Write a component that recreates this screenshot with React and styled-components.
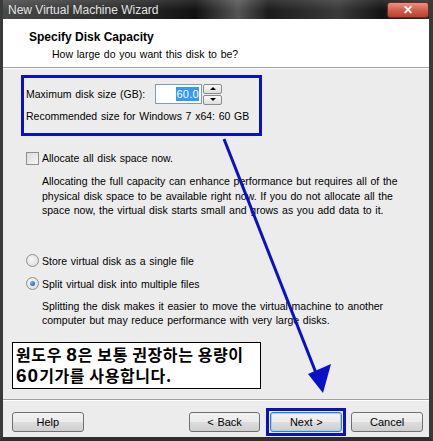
import React from 'react';
import styled, { createGlobalStyle } from 'styled-components';

const Global = createGlobalStyle`
  html, body { margin: 0; padding: 0; background: #fff; }
  body { font-family: "Liberation Sans", Arial, sans-serif; font-size: 10.5px; word-spacing: 0.8px; color: #000; }
`;

const Window = styled.div`
  position: relative;
  width: 433px;
  height: 441px;
  box-sizing: border-box;
  background: #ececec;
  border-left: 3px solid #3a3a3a;
  border-right: 4px solid #3a3a3a;
  border-bottom: 4px solid #2e2e2e;
  display: flex;
  flex-direction: column;
  overflow: hidden;
`;

const TitleBar = styled.div`
  height: 19px;
  margin: 0 -4px 0 -3px;
  padding: 0 4px 0 8px;
  display: flex;
  align-items: center;
  justify-content: space-between;
  background:
    linear-gradient(180deg, rgba(255,255,255,0.12) 0%, rgba(255,255,255,0) 55%),
    linear-gradient(90deg, #4a4a4a 0%, #2a2a2a 30%, #111 45%, #555 55%, #1c1c1c 62%, #3a3a3a 78%, #141414 88%, #2d2d2d 100%);
  color: #e4e4e4;
  font-size: 12px;
  word-spacing: 0;
`;

const CloseButton = styled.div`
  width: 40px;
  height: 14px;
  border-radius: 3px;
  border: 1px solid #6b2a22;
  background: linear-gradient(180deg, #e99384 0%, #d0604f 50%, #b8412f 100%);
  color: #fff;
  font-weight: bold;
  font-size: 12px;
  line-height: 14px;
  text-align: center;
  margin-top: 1px;
`;

const Header = styled.div`
  height: 49px;
  background: #fff;
  border-bottom: 1px solid #a0a0a0;
  box-shadow: 0 1px 0 #fff;
  padding: 11px 0 0 26px;
  box-sizing: border-box;
`;

const HeaderTitle = styled.div`
  font-weight: bold;
  font-size: 12px;
  line-height: 14px;
  word-spacing: 0;
`;

const HeaderSub = styled.div`
  margin: 3px 0 0 23px;
  line-height: 14px;
`;

const Body = styled.div`
  flex: 1;
  padding: 7px 0 0 18px;
  display: flex;
  flex-direction: column;
`;

const HighlightBox = styled.div`
  width: 241px;
  height: 61px;
  box-sizing: border-box;
  border: 3px solid #0a10c8;
  padding: 6px 0 0 2px;
  display: flex;
  flex-direction: column;
  gap: 6px;
`;

const FieldRow = styled.div`
  display: flex;
  align-items: center;
  height: 20px;
`;

const Label = styled.span`
  width: 129px;
`;

const SpinInput = styled.div`
  width: 43px;
  height: 18px;
  border: 1px solid #7f9db9;
  background: #fff;
  display: flex;
  align-items: center;
  justify-content: flex-end;
  padding-right: 2px;
`;

const Selected = styled.span`
  background: #3399ff;
  color: #fff;
  padding: 1px 0;
  font-size: 11px;
  letter-spacing: 0.3px;
`;

const SpinButtons = styled.div`
  margin-left: 1px;
  display: flex;
  flex-direction: column;
  gap: 1px;
`;

const SpinButton = styled.div`
  width: 17px;
  height: 8px;
  border: 1px solid #8a8a8a;
  border-radius: 2px;
  background: linear-gradient(180deg, #fafafa, #dedede);
  display: flex;
  align-items: center;
  justify-content: center;
  &::after {
    content: '';
    border-left: 3px solid transparent;
    border-right: 3px solid transparent;
    ${({ down }) => (down ? 'border-top: 3px solid #000;' : 'border-bottom: 3px solid #000;')}
  }
`;

const Option = styled.div`
  display: flex;
  align-items: center;
  gap: 3px;
  margin-left: 5px;
  height: 14px;
  margin-top: ${({ top }) => top}px;
`;

const CheckBox = styled.span`
  width: 11px;
  height: 11px;
  border: 1px solid #8e8f8f;
  background: linear-gradient(135deg, #dcdcdc, #f6f6f6);
`;

const Radio = styled.span`
  width: 11px;
  height: 11px;
  border-radius: 50%;
  border: 1px solid #8e8f8f;
  background: radial-gradient(circle at 40% 40%, #f8f8f8, #d6d6d6);
  display: flex;
  align-items: center;
  justify-content: center;
  &::after {
    content: '';
    display: ${({ checked }) => (checked ? 'block' : 'none')};
    width: 5px;
    height: 5px;
    border-radius: 50%;
    background: radial-gradient(circle at 35% 35%, #6fb4ff, #0b4fa8);
  }
`;

const Note = styled.p`
  margin: ${({ top }) => top}px 0 0 21px;
  line-height: 14.5px;
  white-space: nowrap;
`;

const KoreanBox = styled.div`
  margin: ${({ top }) => top}px 0 0 -9px;
  width: 249px;
  height: 47px;
  box-sizing: border-box;
  border: 1px solid #000;
  background: #fff;
  padding: 1px 0 0 3px;
  font-family: "Noto Sans CJK KR", sans-serif;
  font-size: 16px;
  font-weight: 700;
  line-height: 21px;
  letter-spacing: 0.6px;
  word-spacing: 0;
  white-space: nowrap;
  b {
    font-weight: 700;
    font-family: "Liberation Sans", "Noto Sans CJK KR", sans-serif;
    font-size: 19px;
    letter-spacing: 1px;
  }
`;

const Footer = styled.div`
  border-top: 1px solid #a0a0a0;
  box-shadow: inset 0 1px 0 #fff;
  height: 38px;
  box-sizing: border-box;
  padding: 12px 6px 0 9px;
  display: flex;
  align-items: flex-start;
`;

const Button = styled.div`
  width: 70px;
  height: 18px;
  border: 1px solid #707070;
  border-radius: 3px;
  background: linear-gradient(180deg, #f2f2f2 0%, #ebebeb 50%, #dddddd 51%, #cfcfcf 100%);
  display: flex;
  align-items: center;
  justify-content: center;
  font-size: 11px;
  margin-left: ${({ gap }) => gap || 0}px;
`;

const FocusFrame = styled.div`
  margin: -4px 0 0 6px;
  padding: 1px;
  border: 3px solid #0a10c8;
  display: flex;
  & > div { border-color: #3c7fb1; box-shadow: inset 0 0 0 1px #97d3f0; }
`;

const Overlay = styled.svg`
  position: absolute;
  left: -3px;
  top: 0;
  pointer-events: none;
`;

export default function App() {
  return (
    <>
      <Global />
      <Window>
        <TitleBar>
          <span>New Virtual Machine Wizard</span>
          <CloseButton>✕</CloseButton>
        </TitleBar>
        <Header>
          <HeaderTitle>Specify Disk Capacity</HeaderTitle>
          <HeaderSub>How large do you want this disk to be?</HeaderSub>
        </Header>
        <Body>
          <HighlightBox>
            <FieldRow>
              <Label>Maximum disk size (GB):</Label>
              <SpinInput><Selected>60.0</Selected></SpinInput>
              <SpinButtons>
                <SpinButton />
                <SpinButton down />
              </SpinButtons>
            </FieldRow>
            <div>Recommended size for Windows 7 x64: 60 GB</div>
          </HighlightBox>
          <Option top={15}>
            <CheckBox />
            <span>Allocate all disk space now.</span>
          </Option>
          <Note top={9}>
            Allocating the full capacity can enhance performance but requires all of the<br />
            physical disk space to be available right now. If you do not allocate all the<br />
            space now, the virtual disk starts small and grows as you add data to it.
          </Note>
          <Option top={36}>
            <Radio />
            <span>Store virtual disk as a single file</span>
          </Option>
          <Option top={9}>
            <Radio checked />
            <span>Split virtual disk into multiple files</span>
          </Option>
          <Note top={8}>
            Splitting the disk makes it easier to move the virtual machine to another<br />
            computer but may reduce performance with very large disks.
          </Note>
          <KoreanBox top={14}>
            원도우 <b>8</b>은 보통 권장하는 용량이<br />
            <b>60</b>기가를 사용합니다.
          </KoreanBox>
        </Body>
        <Footer>
          <Button>Help</Button>
          <Button gap={105}>&lt; Back</Button>
          <FocusFrame>
            <Button>Next &gt;</Button>
          </FocusFrame>
          <Button gap={5}>Cancel</Button>
        </Footer>
        <Overlay width="433" height="441" viewBox="0 0 433 441">
          <line x1="224" y1="139" x2="318" y2="378" stroke="#0a10c8" strokeWidth="3" />
          <polygon points="308,374 331,364 323,393" fill="#0a10c8" />
        </Overlay>
      </Window>
    </>
  );
}
